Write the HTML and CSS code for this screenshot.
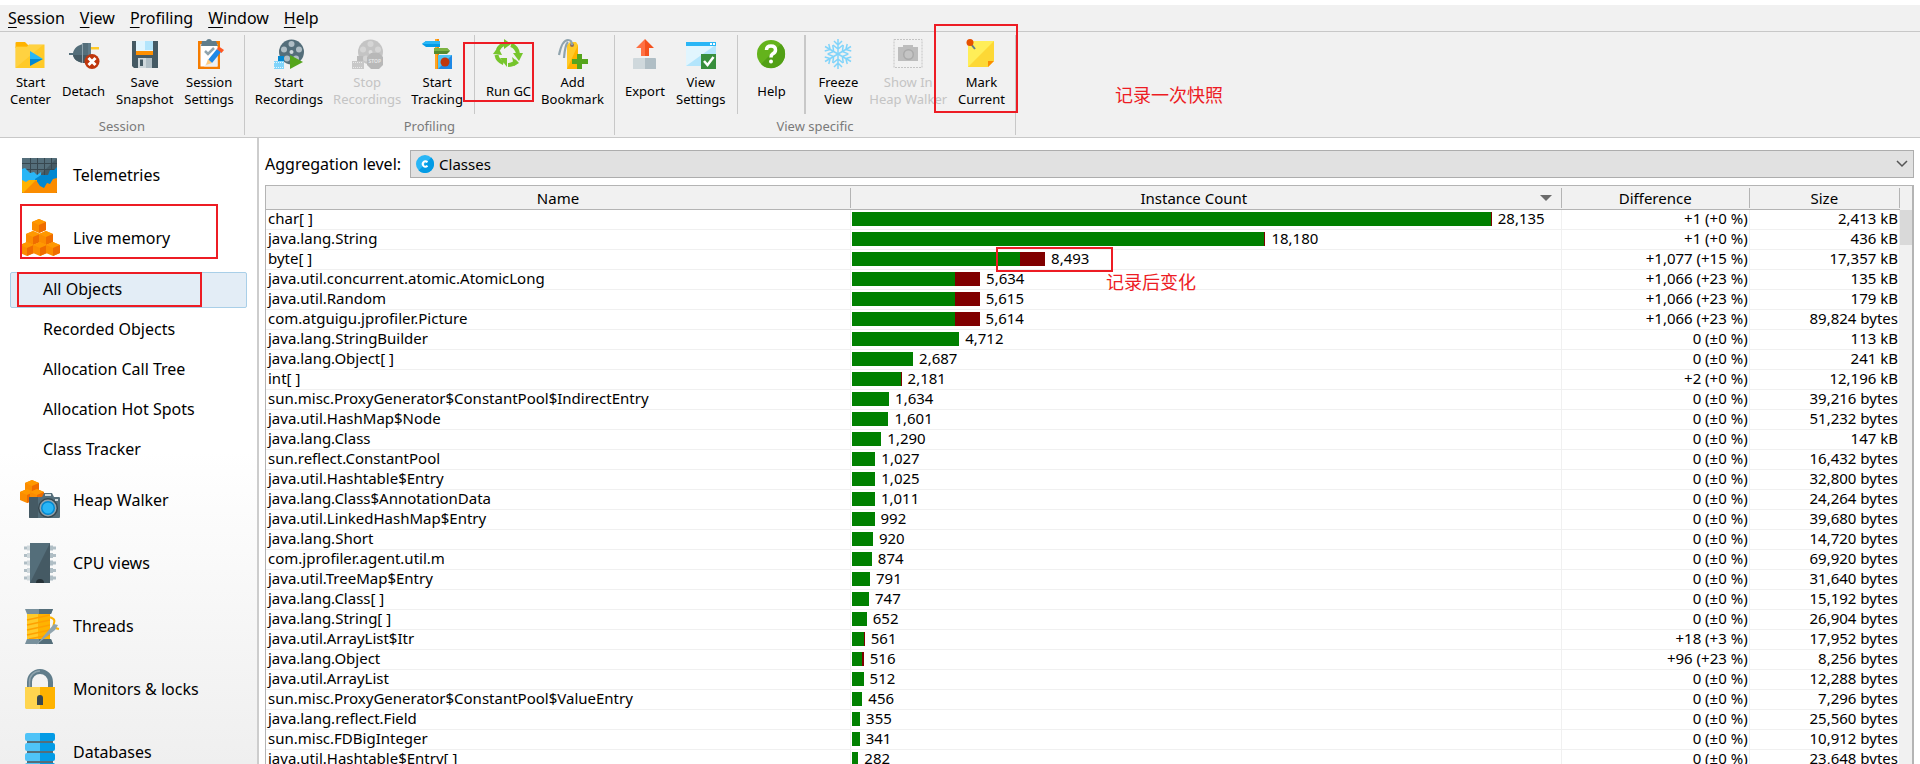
FILE: index.html
```html
<!DOCTYPE html>
<html lang="en">
<head>
<meta charset="utf-8">
<title>JProfiler - All Objects</title>
<link rel="stylesheet" href="styles.css">
</head>
<body>
<div class="app">
  <nav class="menubar">
    <button class="menu"><u>S</u>ession</button>
    <button class="menu"><u>V</u>iew</button>
    <button class="menu"><u>P</u>rofiling</button>
    <button class="menu"><u>W</u>indow</button>
    <button class="menu"><u>H</u>elp</button>
  </nav>

  <header class="toolbar">
    <section class="group group-loose">
      <div class="tools">
        <button class="tool">
          <svg class="icon" viewBox="0 0 30 30"><path fill="#ffb300" d="M.5 4Q.5 3 1.500 3H10l3 3v3H.5z"/><path fill="#ffca28" d="M.5 7.500H12L14 5.500h15.500V29H.5z"/><path fill="#ffd95a" d="M.5 8H12l2-2h14L.5 29z" opacity=".5"/><path fill="#29b6f6" d="M15 12v8h13z"/><path fill="#0288d1" d="M15 27v-7h13z"/></svg>
          <span class="caption">Start<br>Center</span></button>
        <button class="tool">
          <svg class="icon" viewBox="0 0 30 30"><path fill="#546e7a" d="M0 14h4C5 9 9 6 14 5V4h7v20h-7C9 23 5 21 4 16H0z"/><path fill="#455a64" d="M4 16h17v8h-7C9 23 5 21 4 16z"/><path fill="#90a4ae" d="M13 4h1v20h-1z"/><path fill="#607d8b" d="M19 4h3v20h-3z"/><path fill="#ffca28" d="M22 8h8v2.500h-8z"/><circle cx="23" cy="22.500" r="7.500" fill="#bf360c"/><path fill="none" stroke="#fff" stroke-width="3" d="m19.500 19 7 7m0-7-7 7"/></svg>
          <span class="caption">Detach</span></button>
        <button class="tool">
          <svg class="icon" viewBox="0 0 30 30"><path fill="#455a64" d="M2 2h26v27H4l-2-2z"/><path fill="#e1f5fe" d="M6 2h17v11H6z"/><path fill="#b3e5fc" d="M15 2h8v9h-8z"/><path fill="#ff8f00" d="M6 12h17v4H6z"/><path fill="#cfd8dc" d="M8 19h14v10H8z"/><path fill="#b0bec5" d="M16 19h6v10h-6z"/><path fill="#455a64" d="M10 20.500h3V27h-3z"/></svg>
          <span class="caption">Save<br>Snapshot</span></button>
        <button class="tool">
          <svg class="icon" viewBox="0 0 30 30"><path fill="#f57c00" d="M4 2h22v28H4z"/><path fill="#fff" d="M6.500 5h17v22.500h-17z"/><path fill="#eceff1" d="M23.500 8v19.500H10z"/><path fill="#607d8b" d="M8 2h4q1-2 3-2t3 2h4l2 5H7z"/><path fill="none" stroke="#90a4ae" stroke-width="2.500" d="m11 12 3 3 6-6"/><path fill="#1e88e5" d="m14 21 9-11 4 3-9 11z"/><path fill="#ffcc80" d="m14 20 4 4-6 2z"/><path fill="#ff5722" d="m23 10 2-2.500 5 3.500-2.500 3z"/></svg>
          <span class="caption">Session<br>Settings</span></button>
      </div>
      <h2 class="group-title">Session</h2>
    </section>

    <section class="group">
      <div class="tools">
        <button class="tool">
          <svg class="icon" viewBox="0 0 30 30"><circle cx="17.500" cy="13" r="12.500" fill="#546e7a"/><g fill="#b0bec5"><circle cx="17.500" cy="5" r="3"/><circle cx="10" cy="10.500" r="3"/><circle cx="25" cy="10.500" r="3"/><circle cx="13" cy="19.500" r="3"/><circle cx="22" cy="19.500" r="3"/></g><circle cx="17.500" cy="13" r="2" fill="#cfd8dc"/><path fill="#0288d1" d="M4 17h6v6H4z"/><path fill="#81d4fa" d="M0 22h10v8H0z"/><path stroke="#e1f5fe" stroke-dasharray="1 1" d="M0 23.500h10M0 28.500h10"/><path fill="#55a51c" d="M16 16v14l13-7z"/></svg>
          <span class="caption">Start<br>Recordings</span></button>
        <button class="tool" disabled>
          <svg class="icon" viewBox="0 0 30 30"><circle cx="18.500" cy="13" r="12.500" fill="#c4c4c4"/><g fill="#d5d5d5"><circle cx="18.500" cy="5" r="3"/><circle cx="11" cy="10.500" r="3"/><circle cx="26" cy="10.500" r="3"/><circle cx="14" cy="19.500" r="3"/></g><circle cx="18.500" cy="13" r="2" fill="#ddd"/><path fill="#bbb" d="M5 17h6v6H5z"/><path fill="#c8c8c8" d="M0 22h12v8H0z"/><path stroke="#e8e8e8" stroke-dasharray="1 1" d="M1 23.500h10M1 28.500h10"/><path fill="#b8b8b8" d="M19 14h8l4 4v8l-4 4h-8l-4-4v-8z"/><text class="stop" x="16.500" y="24">STOP</text></svg>
          <span class="caption">Stop<br>Recordings</span></button>
        <button class="tool">
          <svg class="icon" viewBox="0 0 30 30"><path fill="#ffa726" d="M13 0h4v30h-4z"/><path fill="#fb8c00" d="M15 0h2v30h-2z"/><path fill="#039be5" d="M0 5l4-3h14v6H4z"/><path fill="#29b6f6" d="M0 5l4-3h14v3z"/><path fill="#558b2f" d="M12 9h13l3 3-3 3H12z"/><path fill="#7cb342" d="M12 9h13l3 3H12z"/><path fill="#1e88e5" d="M16 16h14v14H16z"/><path fill="#4fc3f7" d="M16 16h14L16 30z"/><circle cx="23" cy="23" r="4.500" fill="#bf360c"/></svg>
          <span class="caption">Start<br>Tracking</span></button>
        <i class="divider"></i>
        <button class="tool">
          <svg class="icon" viewBox="0 0 30 30"><g fill="none" stroke="#76c52c" stroke-width="4"><path d="M5 11q2-5 7-6"/><path d="M18 6q6 2 7 9"/><path d="M3.500 16q1 6 7 8"/><path d="M24 22q-4 4-9 4"/></g><g fill="#76c52c"><path d="M11 0 18 5l-7 5z"/><path d="M20 14h10l-4 8z"/><path d="M7 19h7v9z"/><path d="M0 15 5 8l4 8z"/><path d="m19 18 7 6-5 3z"/></g></svg>
          <span class="caption">Run GC</span></button>
        <button class="tool">
          <svg class="icon" viewBox="0 0 30 30"><path fill="#ffca28" d="m9 6 3-3h6l2 3v24H9z"/><path fill="#ffb300" d="m20 6v24H9z"/><circle cx="14" cy="6" r="2" fill="#8d6e63"/><path fill="none" stroke="#90a4ae" stroke-width="2.200" d="M1 16Q4 1 10 1q4 0 4 5M6 19Q7 6 10 3"/><path fill="#55a51c" d="M19 15h5v5h6v5h-6v5h-5v-5h-5v-5h5z"/></svg>
          <span class="caption">Add<br>Bookmark</span></button>
      </div>
      <h2 class="group-title">Profiling</h2>
    </section>

    <section class="group group-loose">
      <div class="tools">
        <button class="tool">
          <svg class="icon" viewBox="0 0 30 30"><path fill="#cfd8dc" d="M3 20q0-1 1-1h22v11H3z"/><path fill="#b0bec5" d="M15 19h10l1 1v10H15z"/><path fill="#ff7043" d="M6 9 15 0v17h-4V9z"/><path fill="#f4511e" d="m15 0 9 9h-5v8h-4z"/></svg>
          <span class="caption">Export</span></button>
        <button class="tool">
          <svg class="icon" viewBox="0 0 30 30"><path fill="#b3e5fc" d="M0 3h30v24H0z"/><path fill="#e1f5fe" d="M0 7h28L0 27z"/><path fill="#29b6f6" d="M0 3h30v4H0z"/><path fill="#fff" d="M24 4h2v2h-2zM27 4h2v2h-2z"/><path fill="#388e3c" d="M15 15h15v15H15z"/><path fill="none" stroke="#fff" stroke-width="2.500" d="m18 22 3.500 4 6-8"/></svg>
          <span class="caption">View<br>Settings</span></button>
        <i class="divider"></i>
        <button class="tool tool-roomy">
          <svg class="icon" viewBox="0 0 30 30"><circle cx="15" cy="15" r="14" fill="#64b31c"/><path fill="#52a016" d="M25 5A14 14 0 0 1 5 25z"/><path fill="none" stroke="#fff" stroke-width="3.500" d="M10.500 11q0-4 4.500-4t4.500 4q0 2.500-3 4-1.500 1-1.500 3.500"/><circle cx="15" cy="22.500" r="2" fill="#fff"/></svg>
          <span class="caption">Help</span></button>
        <i class="divider divider-wide"></i>
        <button class="tool">
          <svg class="icon" viewBox="0 0 30 30"><defs><path id="arm" d="M15 15V0M11 2l4 4 4-4M10 6l5 4 5-4"/></defs><g fill="none" stroke="#81d4fa" stroke-width="1.500"><use href="#arm"/><use href="#arm" transform="rotate(60 15 15)"/><use href="#arm" transform="rotate(120 15 15)"/><use href="#arm" transform="rotate(180 15 15)"/><use href="#arm" transform="rotate(240 15 15)"/><use href="#arm" transform="rotate(300 15 15)"/></g></svg>
          <span class="caption">Freeze<br>View</span></button>
        <button class="tool" disabled>
          <svg class="icon" viewBox="0 0 30 30"><path fill="none" stroke="#c4c4c4" stroke-dasharray="2 1" d="M1 .5h28v28H1z"/><path fill="#bdbdbd" d="M5 8h5V6h10v2h5v14H5z"/><circle cx="15.500" cy="15.500" r="5.500" fill="#aaa"/><circle cx="15.500" cy="15.500" r="4" fill="#c4c4c4"/></svg>
          <span class="caption">Show In<br>Heap Walker</span></button>
        <button class="tool">
          <svg class="icon" viewBox="0 0 30 30"><path fill="#fdd835" d="M2 2h26v20l-6 6H2z"/><path fill="#ffee58" d="M2 2h26L2 28z"/><path fill="#fb8c00" d="M28 22h-6v6z"/><path stroke="#607d8b" stroke-width="2" d="m5 5 4 5"/><circle cx="4" cy="3.500" r="3.500" fill="#e65100"/></svg>
          <span class="caption">Mark<br>Current</span></button>
      </div>
      <h2 class="group-title">View specific</h2>
    </section>
  </header>

  <div class="body">
    <aside class="sidebar">
      <button class="view">
        <svg class="view-icon" viewBox="0 0 40 40"><path fill="#455a64" d="M2 4q0-1 1-1h33q1 0 1 1v34H2z"/><path fill="#546e7a" d="M2 3h35L16 24H2z"/><path stroke="#37474f" d="M2 8.500h35M2 14.500h35M10.500 3v20M17.500 3v20M24.500 3v20M31.500 3v20"/><path fill="#29b6f6" d="m2 14 3-1 5 5 4-1 3 3 4-3v10l-5 8H2z"/><path fill="#0288d1" d="m15 24 6-4h7l2-5h4l3-3v16l-10 6H17z"/><path fill="#ffb300" d="M2 25l4 2 3-2 5 0 3 0v13H3q-1 0-1-1z"/><path fill="#fb8c00" d="m3 38 13-13 4 6 4 2 3-5 3 1 3-5 4-1v14q0 1-1 1z"/></svg>
        Telemetries</button>
      <button class="view">
        <svg class="view-icon" viewBox="0 0 40 40"><defs><g id="cube"><path fill="#fb8c00" d="m0 3 7-3 7 3v8l-7 3-7-3z"/><path fill="#ff9800" d="m0 3 7-3 7 3-7 3z"/><path fill="#ef6c00" d="m7 6 7-3v8l-7 3z"/></g></defs><use href="#cube" x="12" y="1"/><use href="#cube" x="6" y="13"/><use href="#cube" x="19" y="13"/><use href="#cube" x="0" y="24"/><use href="#cube" x="13" y="24"/><use href="#cube" x="26" y="24"/></svg>
        Live memory</button>
      <div class="subviews">
        <button class="subview selected">All Objects</button>
        <button class="subview">Recorded Objects</button>
        <button class="subview">Allocation Call Tree</button>
        <button class="subview">Allocation Hot Spots</button>
        <button class="subview">Class Tracker</button>
      </div>
      <button class="view">
        <svg class="view-icon" viewBox="0 0 40 40"><use href="#cube" x="5" y="0"/><use href="#cube" x="0" y="9"/><use href="#cube" x="10" y="9"/><path fill="#546e7a" d="M9 18q0-1 1-1h12l2-4h8l2 4h5q1 0 1 1v19q0 1-1 1H10q-1 0-1-1z"/><path fill="#455a64" d="M9 18q0-1 1-1h8v21h-8q-1 0-1-1z"/><path fill="#cfd8dc" d="M25 14h6v2h-6zM35 19h3v2h-3z"/><circle cx="28" cy="28" r="10" fill="#37474f"/><circle cx="28" cy="28" r="8.500" fill="#90a4ae"/><circle cx="28" cy="28" r="7" fill="#0288d1"/><circle cx="28" cy="28" r="5.500" fill="#29b6f6"/></svg>
        Heap Walker</button>
      <button class="view">
        <svg class="view-icon" viewBox="0 0 40 40"><path stroke="#b0bec5" stroke-width="3" d="M4 5h32M4 12.500h32M4 20h32M4 27.500h32M4 35h32"/><path stroke="#cfd8dc" stroke-width="5" d="M7 5h4M7 12.500h4M7 20h4M7 27.500h4M7 35h4"/><path stroke="#b0bec5" stroke-width="5" d="M29 5h4M29 12.500h4M29 20h4M29 27.500h4M29 35h4"/><path fill="#455a64" d="M10 0h20v40H10z"/><path fill="#546e7a" d="M10 0h20L10 40z"/><path fill="#263238" d="M16 40a4 4 0 0 1 8 0z"/></svg>
        CPU views</button>
      <button class="view">
        <svg class="view-icon" viewBox="0 0 40 40"><path fill="#ffca28" d="M7 6h23v28H7z"/><path fill="#ffb300" d="M18 6h12v28H18z"/><path stroke="#ffa000" stroke-width="1.500" d="m7 14 23-5M7 19l23-5M7 24l23-5M7 29l23-5M9 33l21-4"/><path fill="#78909c" d="M5 3h28l-2 5H7zM5 38h28l-2-5H7z"/><path fill="#546e7a" d="M19 3h14l-2 5H19zM19 38h14l-2-5H19z"/><path fill="none" stroke="#ffb300" stroke-width="2" d="M28 11q8 1 6 6t5 6"/><path fill="#90a4ae" d="M16 39 34 18l4 1-3 5z"/></svg>
        Threads</button>
      <button class="view">
        <svg class="view-icon" viewBox="0 0 40 40"><path fill="none" stroke="#607d8b" stroke-width="5" d="M9.500 20v-7a10.500 10.500 0 0 1 21 0v7"/><path fill="none" stroke="#90a4ae" stroke-width="1.500" d="M9.500 20v-7A10.500 10.500 0 0 1 20 2"/><path fill="#ffd54f" d="M5 18h15v22H6l-1-1z"/><path fill="#ffb300" d="M20 18h15v21l-1 1H20z"/><path fill="#37474f" d="M17 36V29a3 3 0 1 1 6 0v7z"/></svg>
        Monitors &amp; locks</button>
      <button class="view">
        <svg class="view-icon" viewBox="0 0 40 40"><defs><g id="disk"><path fill="#4fc3f7" d="M5 2q0-2 2-2h13v8H7q-2 0-2-2z"/><path fill="#039be5" d="M20 0h13q2 0 2 2v4q0 2-2 2H20z"/></g></defs><path fill="#546e7a" d="M7 3h26v34H7z"/><use href="#disk" y="1"/><use href="#disk" y="11"/><use href="#disk" y="21"/><use href="#disk" y="31"/></svg>
        Databases</button>
    </aside>

    <main class="content">
      <div class="filter">
        <label for="level">Aggregation level:</label>
        <div class="combo">
          <svg class="combo-icon" viewBox="0 0 18 18"><circle cx="9" cy="9" r="9" fill="#29b6f6"/><path fill="#039be5" d="M15.400 2.600A9 9 0 0 1 2.600 15.400z"/><path fill="none" stroke="#fff" stroke-width="2" d="M11.500 7.200Q9.200 5.200 7.500 7.200t0 3.600q1.700 2 4 0"/></svg>
          <select id="level" class="select"><option>Classes</option></select>
          <svg class="chevron" viewBox="0 0 12 8"><path fill="none" stroke="#555" stroke-width="1.500" d="m1 1 5 5 5-5"/></svg>
        </div>
      </div>

      <div class="frame">
        <table class="objects">
          <colgroup><col class="c-name"><col class="c-count"><col class="c-diff"><col class="c-size"></colgroup>
          <thead>
            <tr><th><span>Name</span></th><th class="sorted"><span>Instance Count</span></th><th><span>Difference</span></th><th><span>Size</span></th></tr>
          </thead>
          <tbody>
            <tr><td>char[ ]</td><td><div class="count"><i class="bar" style="width:90.27%"><b style="width:0%"></b></i>28,135</div></td><td>+1 (+0 %)</td><td>2,413 kB</td></tr>
            <tr><td>java.lang.String</td><td><div class="count"><i class="bar" style="width:58.33%"><b style="width:0%"></b></i>18,180</div></td><td>+1 (+0 %)</td><td>436 kB</td></tr>
            <tr><td>byte[ ]</td><td><div class="count"><i class="bar" style="width:27.25%"><b style="width:13%"></b></i>8,493</div></td><td>+1,077 (+15 %)</td><td>17,357 kB</td></tr>
            <tr><td>java.util.concurrent.atomic.AtomicLong</td><td><div class="count"><i class="bar" style="width:18.08%"><b style="width:19.500%"></b></i>5,634</div></td><td>+1,066 (+23 %)</td><td>135 kB</td></tr>
            <tr><td>java.util.Random</td><td><div class="count"><i class="bar" style="width:18.02%"><b style="width:19.500%"></b></i>5,615</div></td><td>+1,066 (+23 %)</td><td>179 kB</td></tr>
            <tr><td>com.atguigu.jprofiler.Picture</td><td><div class="count"><i class="bar" style="width:18.01%"><b style="width:19.500%"></b></i>5,614</div></td><td>+1,066 (+23 %)</td><td>89,824 bytes</td></tr>
            <tr><td>java.lang.StringBuilder</td><td><div class="count"><i class="bar" style="width:15.12%"></i>4,712</div></td><td>0 (±0 %)</td><td>113 kB</td></tr>
            <tr><td>java.lang.Object[ ]</td><td><div class="count"><i class="bar" style="width:8.62%"></i>2,687</div></td><td>0 (±0 %)</td><td>241 kB</td></tr>
            <tr><td>int[ ]</td><td><div class="count"><i class="bar" style="width:7%"><b style="width:0%"></b></i>2,181</div></td><td>+2 (+0 %)</td><td>12,196 kB</td></tr>
            <tr><td>sun.misc.ProxyGenerator$ConstantPool$IndirectEntry</td><td><div class="count"><i class="bar" style="width:5.24%"></i>1,634</div></td><td>0 (±0 %)</td><td>39,216 bytes</td></tr>
            <tr><td>java.util.HashMap$Node</td><td><div class="count"><i class="bar" style="width:5.14%"></i>1,601</div></td><td>0 (±0 %)</td><td>51,232 bytes</td></tr>
            <tr><td>java.lang.Class</td><td><div class="count"><i class="bar" style="width:4.14%"></i>1,290</div></td><td>0 (±0 %)</td><td>147 kB</td></tr>
            <tr><td>sun.reflect.ConstantPool</td><td><div class="count"><i class="bar" style="width:3.3%"></i>1,027</div></td><td>0 (±0 %)</td><td>16,432 bytes</td></tr>
            <tr><td>java.util.Hashtable$Entry</td><td><div class="count"><i class="bar" style="width:3.29%"></i>1,025</div></td><td>0 (±0 %)</td><td>32,800 bytes</td></tr>
            <tr><td>java.lang.Class$AnnotationData</td><td><div class="count"><i class="bar" style="width:3.24%"></i>1,011</div></td><td>0 (±0 %)</td><td>24,264 bytes</td></tr>
            <tr><td>java.util.LinkedHashMap$Entry</td><td><div class="count"><i class="bar" style="width:3.18%"></i>992</div></td><td>0 (±0 %)</td><td>39,680 bytes</td></tr>
            <tr><td>java.lang.Short</td><td><div class="count"><i class="bar" style="width:2.95%"></i>920</div></td><td>0 (±0 %)</td><td>14,720 bytes</td></tr>
            <tr><td>com.jprofiler.agent.util.m</td><td><div class="count"><i class="bar" style="width:2.8%"></i>874</div></td><td>0 (±0 %)</td><td>69,920 bytes</td></tr>
            <tr><td>java.util.TreeMap$Entry</td><td><div class="count"><i class="bar" style="width:2.54%"></i>791</div></td><td>0 (±0 %)</td><td>31,640 bytes</td></tr>
            <tr><td>java.lang.Class[ ]</td><td><div class="count"><i class="bar" style="width:2.4%"></i>747</div></td><td>0 (±0 %)</td><td>15,192 bytes</td></tr>
            <tr><td>java.lang.String[ ]</td><td><div class="count"><i class="bar" style="width:2.09%"></i>652</div></td><td>0 (±0 %)</td><td>26,904 bytes</td></tr>
            <tr><td>java.util.ArrayList$Itr</td><td><div class="count"><i class="bar" style="width:1.8%"><b style="width:3%"></b></i>561</div></td><td>+18 (+3 %)</td><td>17,952 bytes</td></tr>
            <tr><td>java.lang.Object</td><td><div class="count"><i class="bar" style="width:1.66%"><b style="width:19%"></b></i>516</div></td><td>+96 (+23 %)</td><td>8,256 bytes</td></tr>
            <tr><td>java.util.ArrayList</td><td><div class="count"><i class="bar" style="width:1.64%"></i>512</div></td><td>0 (±0 %)</td><td>12,288 bytes</td></tr>
            <tr><td>sun.misc.ProxyGenerator$ConstantPool$ValueEntry</td><td><div class="count"><i class="bar" style="width:1.46%"></i>456</div></td><td>0 (±0 %)</td><td>7,296 bytes</td></tr>
            <tr><td>java.lang.reflect.Field</td><td><div class="count"><i class="bar" style="width:1.14%"></i>355</div></td><td>0 (±0 %)</td><td>25,560 bytes</td></tr>
            <tr><td>sun.misc.FDBigInteger</td><td><div class="count"><i class="bar" style="width:1.09%"></i>341</div></td><td>0 (±0 %)</td><td>10,912 bytes</td></tr>
            <tr><td>java.util.Hashtable$Entry[ ]</td><td><div class="count"><i class="bar" style="width:.9%"></i>282</div></td><td>0 (±0 %)</td><td>23,648 bytes</td></tr>
          </tbody>
        </table>
        <div class="scrollbar"><div class="thumb"></div></div>
      </div>
    </main>
  </div>

  <div class="note-box note-gc"></div>
  <div class="note-box note-mark"></div>
  <div class="note-box note-memory"></div>
  <div class="note-box note-objects"></div>
  <div class="note-box note-change"></div>
  <p class="note-text note-snapshot">记录一次快照</p>
  <p class="note-text note-after">记录后变化</p>
</div>
</body>
</html>
```
FILE: styles.css
```css
* { box-sizing: border-box; }

body {
  margin: 0;
  background: #fff;
  color: #000;
  font: 15px/20px "Noto Sans", "Noto Sans CJK SC", sans-serif;
}

button {
  border: 0;
  padding: 0;
  background: none;
  color: inherit;
  font: inherit;
}

.app {
  position: relative;
  display: flex;
  flex-direction: column;
  height: 100vh;
  padding-top: 5px;
  overflow: hidden;
}

/* Menu bar */
.menubar {
  display: flex;
  flex: none;
  gap: 15px;
  padding: 3px 8px;
  background: #f1f1f1;
  border-bottom: 1px solid #c8c8c8;
  font-size: 16px;
}
.menu u { text-underline-offset: 3px; }

/* Toolbar */
.toolbar {
  display: flex;
  flex: none;
  padding: 3px 0 2px;
  background: #f1f1f1;
  border-bottom: 1px solid #c8c8c8;
}
.group {
  display: flex;
  flex-direction: column;
  padding: 0 5px;
  border-right: 1px solid #c8c8c8;
}
.tools { display: flex; height: 79px; }
.group-loose .tools { gap: 1px; }
.tool {
  display: flex;
  flex-direction: column;
  align-items: center;
  gap: 5px;
  padding: 4px 5px 0;
  font-size: 13px;
  line-height: 17px;
}
.tool-roomy { padding: 4px 11px 0; }
.tool:disabled { color: #c4c4c4; }
.icon { width: 30px; height: 30px; flex: none; overflow: visible; }
.caption {
  display: flex;
  align-items: center;
  height: 34px;
  white-space: nowrap;
}
.stop { font: bold 5px "Noto Sans", sans-serif; fill: #e4e4e4; }
.divider { width: 1px; margin: 0 6px; background: #c8c8c8; }
.divider-wide { width: 2px; }
.group-title {
  margin: 0;
  padding-top: 3px;
  color: #7a7a7a;
  font-size: 13px;
  font-weight: 400;
  line-height: 18px;
  text-align: center;
}

/* Sidebar */
.body { display: flex; flex: 1; min-height: 0; }
.sidebar {
  display: flex;
  flex: none;
  flex-direction: column;
  width: 259px;
  padding: 5px 10px 0;
  overflow: hidden;
  background: linear-gradient(#fff 50%, #efefef);
  border-right: 2px solid #cdcdcd;
  font-size: 16px;
}
.view {
  display: flex;
  flex: none;
  align-items: center;
  gap: 13px;
  height: 63px;
  padding-left: 10px;
}
.view-icon { width: 40px; height: 40px; flex: none; }
.subviews {
  display: flex;
  flex: none;
  flex-direction: column;
  gap: 4px;
  padding-top: 3px;
}
.subview {
  height: 36px;
  padding: 0 0 2px 32px;
  border: 1px solid transparent;
  border-radius: 2px;
  text-align: left;
}
.selected { background: #e3edf6; border-color: #a9cfe8; }

/* Content */
.content {
  display: flex;
  flex: 1;
  flex-direction: column;
  min-width: 0;
  padding: 12px 6px 0;
}
.filter { display: flex; align-items: center; gap: 9px; flex: none; }
.filter label { font-size: 16px; }
.combo { position: relative; flex: 1; }
.select {
  display: block;
  width: 100%;
  height: 28px;
  padding: 0 28px;
  appearance: none;
  background: #e1e1e1;
  border: 1px solid #adadad;
  border-radius: 0;
  color: #000;
  font: inherit;
}
.combo-icon { position: absolute; left: 6px; top: 5px; width: 18px; height: 18px; }
.chevron { position: absolute; right: 6px; top: 10px; width: 12px; height: 8px; }

.frame {
  display: flex;
  flex: 1;
  align-items: flex-start;
  min-height: 0;
  margin-top: 7px;
  overflow: hidden;
  border: 1px solid #b4b4b4;
  border-right-width: 2px;
  border-bottom: 0;
}
.objects {
  flex: 1;
  min-width: 0;
  table-layout: fixed;
  border-spacing: 0;
}
.c-name { width: 35.8%; }
.c-count { width: 43.5%; }
.c-diff { width: 11.5%; }
.c-size { width: 9.2%; }
.objects th {
  height: 24px;
  padding: 2px 0 1px;
  background: #f1f1f1;
  border-bottom: 1px solid #b4b4b4;
  font-weight: 400;
}
.objects th span { display: block; border-right: 1px solid #b4b4b4; }
.objects .sorted { position: relative; }
.objects .sorted span { padding-right: 24px; }
.sorted::after {
  content: "";
  position: absolute;
  right: 10px;
  top: 9px;
  border: 6px solid transparent;
  border-top-color: #6b6b6b;
}
.objects td {
  height: 20px;
  padding: 0 1px 0 2px;
  overflow: hidden;
  border-right: 1px solid #f0f0f0;
  border-bottom: 1px solid #f0f0f0;
  line-height: 16px;
  vertical-align: top;
  white-space: nowrap;
}
.objects td:nth-child(2) { padding: 0 0 0 1px; }
.objects td:nth-child(n+3) { text-align: right; }
.count { display: flex; align-items: flex-start; gap: 6px; }
.bar {
  display: flex;
  flex: none;
  justify-content: flex-end;
  height: 14px;
  margin-top: 2px;
  background: #008000;
}
.bar b { min-width: 1px; background: #800000; }

.scrollbar {
  align-self: stretch;
  width: 12px;
  padding-top: 24px;
  background: #f1f1f1;
}
.thumb { height: 35px; background: #d9d9d9; }

/* Red review notes drawn over the window */
.note-box {
  position: absolute;
  border: 2px solid #ed1c24;
  pointer-events: none;
}
.note-gc { left: 463px; top: 42px; width: 71px; height: 60px; }
.note-mark { left: 934px; top: 24px; width: 84px; height: 89px; }
.note-memory { left: 20px; top: 204px; width: 198px; height: 55px; }
.note-objects { left: 17px; top: 272px; width: 185px; height: 35px; }
.note-change { left: 996px; top: 247px; width: 117px; height: 25px; }
.note-text {
  position: absolute;
  margin: 0;
  color: #ed1c24;
  font: 18px/24px "Noto Sans CJK SC", sans-serif;
}
.note-snapshot { left: 1115px; top: 82px; }
.note-after { left: 1106px; top: 269px; }
```
